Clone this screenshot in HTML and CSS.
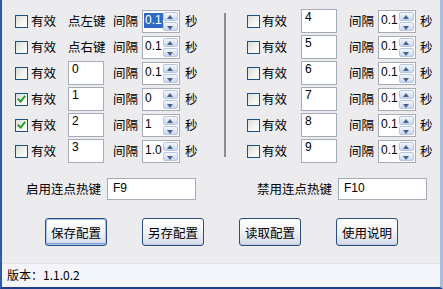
FILE: index.html
```html
<!DOCTYPE html>
<html lang="zh-CN">
  <head>
    <meta charset="UTF-8" />
    <title>连点器</title>
    <link rel="stylesheet" href="styles.css">
  </head>
  <body>
    <div class="ventana">
      <div class="contenido">
        <div class="grupos">
          <div class="columna izquierda">
            <div class="fila">
              <span class="check"></span><span class="txt">有效</span>
              <span class="tecla txt">点左键</span>
              <span class="txt">间隔</span>
              <span class="spin"><span class="valor sel">0.1</span><span class="flechas"><i class="up"></i><i class="down"></i></span></span>
              <span class="txt">秒</span>
            </div>
            <div class="fila">
              <span class="check"></span><span class="txt">有效</span>
              <span class="tecla txt">点右键</span>
              <span class="txt">间隔</span>
              <span class="spin"><span class="valor">0.1</span><span class="flechas"><i class="up"></i><i class="down"></i></span></span>
              <span class="txt">秒</span>
            </div>
            <div class="fila">
              <span class="check"></span><span class="txt">有效</span>
              <span class="tecla"><span class="caja">0</span></span>
              <span class="txt">间隔</span>
              <span class="spin"><span class="valor">0.1</span><span class="flechas"><i class="up"></i><i class="down"></i></span></span>
              <span class="txt">秒</span>
            </div>
            <div class="fila">
              <span class="check on"></span><span class="txt">有效</span>
              <span class="tecla"><span class="caja">1</span></span>
              <span class="txt">间隔</span>
              <span class="spin"><span class="valor">0</span><span class="flechas"><i class="up"></i><i class="down"></i></span></span>
              <span class="txt">秒</span>
            </div>
            <div class="fila">
              <span class="check on"></span><span class="txt">有效</span>
              <span class="tecla"><span class="caja">2</span></span>
              <span class="txt">间隔</span>
              <span class="spin"><span class="valor">1</span><span class="flechas"><i class="up"></i><i class="down"></i></span></span>
              <span class="txt">秒</span>
            </div>
            <div class="fila">
              <span class="check"></span><span class="txt">有效</span>
              <span class="tecla"><span class="caja">3</span></span>
              <span class="txt">间隔</span>
              <span class="spin"><span class="valor">1.0</span><span class="flechas"><i class="up"></i><i class="down"></i></span></span>
              <span class="txt">秒</span>
            </div>
          </div>
          <div class="separador"></div>
          <div class="columna derecha">
            <div class="fila">
              <span class="check"></span><span class="txt">有效</span>
              <span class="tecla"><span class="caja">4</span></span>
              <span class="txt">间隔</span>
              <span class="spin"><span class="valor">0.1</span><span class="flechas"><i class="up"></i><i class="down"></i></span></span>
              <span class="txt">秒</span>
            </div>
            <div class="fila">
              <span class="check"></span><span class="txt">有效</span>
              <span class="tecla"><span class="caja">5</span></span>
              <span class="txt">间隔</span>
              <span class="spin"><span class="valor">0.1</span><span class="flechas"><i class="up"></i><i class="down"></i></span></span>
              <span class="txt">秒</span>
            </div>
            <div class="fila">
              <span class="check"></span><span class="txt">有效</span>
              <span class="tecla"><span class="caja">6</span></span>
              <span class="txt">间隔</span>
              <span class="spin"><span class="valor">0.1</span><span class="flechas"><i class="up"></i><i class="down"></i></span></span>
              <span class="txt">秒</span>
            </div>
            <div class="fila">
              <span class="check"></span><span class="txt">有效</span>
              <span class="tecla"><span class="caja">7</span></span>
              <span class="txt">间隔</span>
              <span class="spin"><span class="valor">0.1</span><span class="flechas"><i class="up"></i><i class="down"></i></span></span>
              <span class="txt">秒</span>
            </div>
            <div class="fila">
              <span class="check"></span><span class="txt">有效</span>
              <span class="tecla"><span class="caja">8</span></span>
              <span class="txt">间隔</span>
              <span class="spin"><span class="valor">0.1</span><span class="flechas"><i class="up"></i><i class="down"></i></span></span>
              <span class="txt">秒</span>
            </div>
            <div class="fila">
              <span class="check"></span><span class="txt">有效</span>
              <span class="tecla"><span class="caja">9</span></span>
              <span class="txt">间隔</span>
              <span class="spin"><span class="valor">0.1</span><span class="flechas"><i class="up"></i><i class="down"></i></span></span>
              <span class="txt">秒</span>
            </div>
          </div>
        </div>

        <div class="atajos">
          <div class="atajo">
            <span class="txt">启用连点热键</span>
            <span class="caja larga">F9</span>
          </div>
          <div class="atajo">
            <span class="txt">禁用连点热键</span>
            <span class="caja larga">F10</span>
          </div>
        </div>

        <div class="botones">
          <button class="boton defecto">保存配置</button>
          <button class="boton">另存配置</button>
          <button class="boton">读取配置</button>
          <button class="boton">使用说明</button>
        </div>
      </div>
      <div class="estado">版本：1.1.0.2</div>
    </div>
  </body>
</html>
```

FILE: styles.css
```css
* {
  margin: 0;
  padding: 0;
  box-sizing: border-box;
}

body {
  width: 443px;
  height: 289px;
  overflow: hidden;
  font-family: "Noto Sans CJK SC", "DejaVu Sans", sans-serif;
  font-size: 12.5px;
  color: #000;
  background: #ecebee;
}

.ventana {
  width: 443px;
  height: 289px;
  display: flex;
  flex-direction: column;
  border-left: 2px solid #2f5aa9;
  border-right: 3px solid #a9bddf;
  border-bottom: 2px solid #1f3f8a;
}

.contenido {
  height: 263px;
}

.grupos {
  display: flex;
  padding-top: 8px;
}

.columna {
  display: flex;
  flex-direction: column;
}

.izquierda {
  padding-left: 13px;
  width: 222px;
}

.derecha {
  padding-left: 21px;
}

.separador {
  width: 2px;
  height: 144px;
  margin-top: 5px;
  background: #8e8e8e;
}

.fila {
  height: 26px;
  display: grid;
  grid-template-columns: 16px 37px 45px 29px 43px auto;
  align-items: center;
}

.derecha .fila {
  grid-template-columns: 15px 39px 48px 29px 42px auto;
}

.txt {
  line-height: 16px;
  white-space: nowrap;
}

.check {
  width: 13px;
  height: 13px;
  border: 1px solid #1c5180;
  background: linear-gradient(135deg, #dcdcd7 0%, #f4f4f2 60%, #fff 100%);
  position: relative;
}

.check.on::after {
  content: "";
  position: absolute;
  left: 3px;
  top: 0px;
  width: 3px;
  height: 6px;
  border: solid #21a121;
  border-width: 0 2px 2px 0;
  transform: rotate(40deg);
}

.caja {
  display: block;
  width: 36px;
  height: 24px;
  background: #fff;
  border: 1px solid #a5acb5;
  font-family: "Liberation Sans", sans-serif;
  font-size: 12px;
  line-height: 15px;
  padding-left: 3px;
}

.caja.larga {
  width: 89px;
  height: 22px;
  line-height: 18px;
  padding-left: 5px;
}

.spin {
  width: 38px;
  height: 23px;
  background: #fff;
  border: 1px solid #a5acb5;
  display: flex;
  justify-content: space-between;
  padding: 1px;
}

.valor {
  font-family: "Liberation Sans", sans-serif;
  font-size: 12px;
  line-height: 15px;
  height: 15px;
  padding: 0 1px;
  margin-top: 1px;
  align-self: flex-start;
}

.valor.sel {
  background: #316ac5;
  color: #fff;
}

.flechas {
  width: 15px;
  display: flex;
  flex-direction: column;
  gap: 1px;
}

.flechas i {
  flex: 1;
  border: 1px solid #b6c6e4;
  border-radius: 2px;
  background: linear-gradient(#f4f7fd, #c8d6f1);
  position: relative;
}

.flechas i::after {
  content: "";
  position: absolute;
  left: 3px;
  border-left: 3.5px solid transparent;
  border-right: 3.5px solid transparent;
}

.flechas .up::after {
  top: 2px;
  border-bottom: 4px solid #4d6185;
}

.flechas .down::after {
  top: 3px;
  border-top: 4px solid #4d6185;
}

.atajos {
  display: flex;
  gap: 61px;
  padding-left: 24px;
  margin-top: 14px;
}

.atajo {
  display: flex;
  align-items: center;
  gap: 6px;
}

.botones {
  display: flex;
  gap: 35px;
  padding-left: 43px;
  margin-top: 18px;
}

.boton {
  width: 62px;
  height: 28px;
  font-family: "Noto Sans CJK SC", sans-serif;
  font-size: 12.5px;
  border: 1px solid #2d4e82;
  border-radius: 3px;
  background: linear-gradient(#ffffff 0%, #f3f4f8 45%, #d3dae8 100%);
  box-shadow: inset 0 -1px 0 #c3ccdd;
}

.boton.defecto {
  box-shadow: inset 0 0 0 1px #a8c3ee, inset 0 -2px 0 #7f9fd8;
}

.estado {
  flex: 1;
  background: #f3f5fa;
  border-top: 1px solid #e2e3ea;
  padding-left: 5px;
  line-height: 21px;
  font-size: 12px;
}
```
